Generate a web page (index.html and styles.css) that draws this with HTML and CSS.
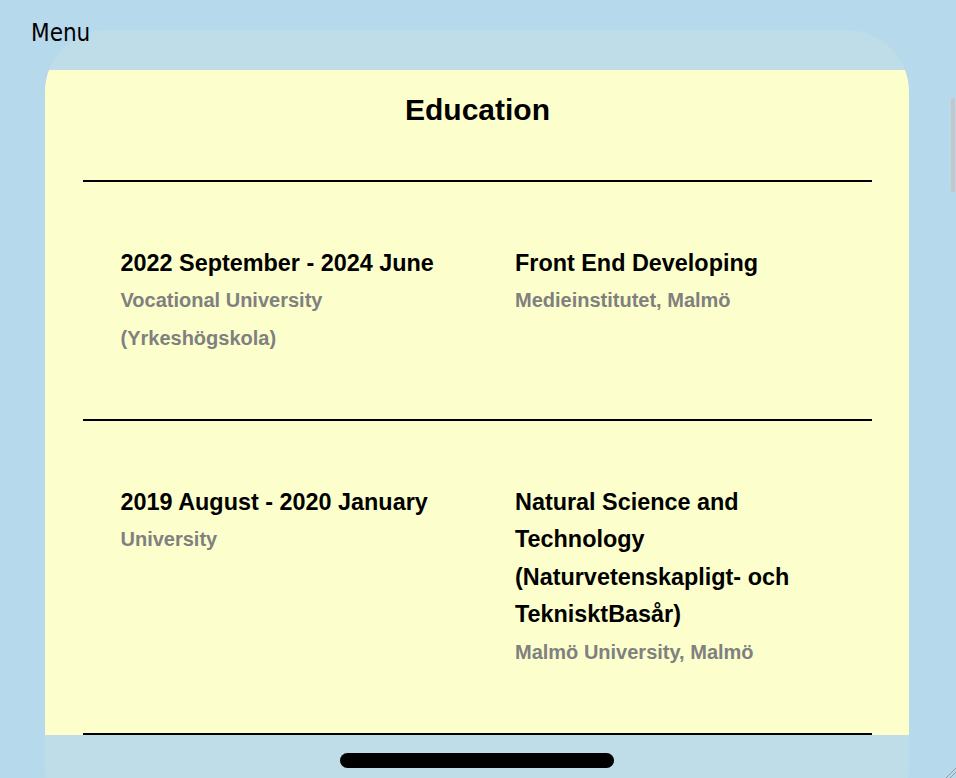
FILE: index.html
```html
<!DOCTYPE html>
<html lang="en">
<head>
<meta charset="utf-8">
<title>Education</title>
<link rel="stylesheet" href="styles.css">
</head>
<body>
<div class="page">
  <div class="menu">Menu</div>
  <div class="frame">
    <div class="frame-top"></div>
    <main class="screen">
      <h1 class="title">Education</h1>
      <hr class="rule">
      <section class="row">
        <div class="col">
          <div class="item-title">2022 September - 2024 June</div>
          <div class="item-sub">Vocational University (Yrkeshögskola)</div>
        </div>
        <div class="col">
          <div class="item-title">Front End Developing</div>
          <div class="item-sub">Medieinstitutet, Malmö</div>
        </div>
      </section>
      <hr class="rule">
      <section class="row">
        <div class="col">
          <div class="item-title">2019 August - 2020 January</div>
          <div class="item-sub">University</div>
        </div>
        <div class="col">
          <div class="item-title">Natural Science and Technology (Naturvetenskapligt- och TeknisktBasår)</div>
          <div class="item-sub">Malmö University, Malmö</div>
        </div>
      </section>
      <hr class="rule">
    </main>
    <div class="frame-bottom"><div class="home-pill"></div></div>
  </div>
  <div class="scroll-thumb"></div>
  <svg class="grip" width="12" height="12" viewBox="0 0 12 12"><path d="M12 2 L2 12 M12 6 L6 12" stroke="#9a9a9a" stroke-width="1"/></svg>
</div>
</body>
</html>
```
FILE: styles.css
```css
html, body {
  margin: 0;
  padding: 0;
  height: 778px;
  overflow: hidden;
  background: #b7d9ec;
}

.page {
  position: relative;
  height: 778px;
  padding: 30px 47px 0 45px;
  box-sizing: border-box;
}

.menu {
  position: absolute;
  left: 31px;
  top: 18px;
  font-family: "DejaVu Sans Condensed", "DejaVu Sans", sans-serif;
  font-size: 24px;
  line-height: 30px;
  color: #000;
  z-index: 2;
}

.frame {
  width: 864px;
  height: 800px;
  border-radius: 62px;
  overflow: hidden;
  background: #bfdde8;
  display: flex;
  flex-direction: column;
}

.frame-top {
  height: 40px;
  flex: none;
}

.screen {
  height: 665px;
  flex: none;
  background: #fcffcc;
  padding: 0 37px 0 38px;
  overflow: hidden;
  font-family: "Liberation Sans", Arial, sans-serif;
}

.title {
  margin: 0 0 50px;
  padding-top: 20px;
  font-size: 30px;
  line-height: 40px;
  font-weight: bold;
  text-align: center;
  color: #000;
}

.rule {
  margin: 0;
  border: 0;
  border-top: 2px solid #000;
  height: 0;
}

.row {
  display: grid;
  grid-template-columns: 1fr 1fr;
  padding: 62.5px 0 62px;
  line-height: 37.5px;
}

.col {
  padding: 0 37.5px;
}

.item-title {
  font-size: 23.4px;
  font-weight: bold;
  color: #000;
}

.item-sub {
  font-size: 20px;
  font-weight: bold;
  color: #808080;
}

.frame-bottom {
  flex: 1;
  display: flex;
  justify-content: center;
  padding-top: 18px;
}

.home-pill {
  width: 274px;
  height: 15px;
  border-radius: 8px;
  background: #000;
}

.scroll-thumb {
  position: absolute;
  right: 1px;
  top: 98px;
  width: 4px;
  height: 94px;
  border-radius: 2px;
  background: #c6c6c6;
}

.grip {
  position: absolute;
  right: 0;
  bottom: 0;
}
```
